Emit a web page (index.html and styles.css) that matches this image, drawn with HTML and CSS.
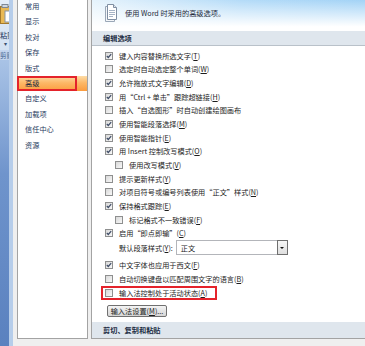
FILE: index.html
```html
<!DOCTYPE html>
<html lang="zh-CN">
  <head>
    <meta charset="UTF-8" />
    <title>Word 选项 - 高级</title>
    <link rel="stylesheet" href="styles.css">
  </head>
  <body>
    <div class="ribbon">
      <div class="ribbon-top">
        <svg class="paste-icon" width="9" height="20" viewBox="0 0 9 20">
          <rect x="0.5" y="2.5" width="9" height="17" fill="#e9b955" stroke="#a57a2c" />
          <rect x="2" y="0.5" width="6" height="3" fill="#cfd6df" stroke="#7d8794" />
          <rect x="5" y="7" width="5" height="11" fill="#ffffff" stroke="#8a96a6" />
        </svg>
        <div class="ribbon-text">粘贴</div>
        <div class="ribbon-arrow">▾</div>
      </div>
      <div class="ribbon-label">剪贴板</div>
      <div class="ribbon-rest"></div>
    </div>
    <div class="stripe"></div>

    <div class="dialog">
      <ul class="nav">
        <li>常用</li>
        <li>显示</li>
        <li>校对</li>
        <li>保存</li>
        <li>版式</li>
        <li class="active">高级<span class="mark"></span></li>
        <li>自定义</li>
        <li>加载项</li>
        <li>信任中心</li>
        <li>资源</li>
      </ul>

      <div class="panel">
        <div class="panel-head">
          <svg class="doc-icon" width="12" height="18" viewBox="0 0 12 18">
            <path d="M0.5 2.5 H6.5 L9.5 5.5 V17.5 H0.5 Z" fill="#f4f6f9" stroke="#9aa7b7" />
            <path d="M2.5 0.5 H8.5 L11.5 3.5 V15.5 H2.5 Z" fill="#ffffff" stroke="#7f8fa3" />
            <path d="M8.5 0.5 V3.5 H11.5" fill="#e3e8ef" stroke="#7f8fa3" />
            <path d="M4 6.5 H10 M4 8.5 H10 M4 10.5 H10 M4 12.5 H8" stroke="#a6b4c6" />
          </svg>
          <span class="head-text">使用 Word 时采用的高级选项。</span>
        </div>

        <div class="section">编辑选项</div>

        <div class="options">
          <div class="opt"><span class="check on"></span><span>键入内容替换所选文字(<u>T</u>)</span></div>
          <div class="opt"><span class="check"></span><span>选定时自动选定整个单词(<u>W</u>)</span></div>
          <div class="opt"><span class="check on"></span><span>允许拖放式文字编辑(<u>D</u>)</span></div>
          <div class="opt"><span class="check on"></span><span>用“Ctrl + 单击”跟踪超链接(<u>H</u>)</span></div>
          <div class="opt"><span class="check"></span><span>插入“自选图形”时自动创建绘图画布</span></div>
          <div class="opt"><span class="check on"></span><span>使用智能段落选择(<u>M</u>)</span></div>
          <div class="opt"><span class="check on"></span><span>使用智能指针(<u>E</u>)</span></div>
          <div class="opt"><span class="check on"></span><span>用 Insert 控制改写模式(<u>O</u>)</span></div>
          <div class="opt sub"><span class="check"></span><span>使用改写模式(<u>V</u>)</span></div>
          <div class="opt"><span class="check"></span><span>提示更新样式(<u>Y</u>)</span></div>
          <div class="opt"><span class="check"></span><span>对项目符号或编号列表使用“正文”样式(<u>N</u>)</span></div>
          <div class="opt"><span class="check on"></span><span>保持格式跟踪(<u>E</u>)</span></div>
          <div class="opt sub"><span class="check"></span><span>标记格式不一致错误(<u>F</u>)</span></div>
          <div class="opt"><span class="check on"></span><span>启用“即点即输”(<u>C</u>)</span></div>

          <div class="select-row">
            <span class="select-label">默认段落样式(<u>Y</u>):</span>
            <div class="select">
              <span class="select-value">正文</span>
              <span class="select-btn"></span>
            </div>
          </div>

          <div class="opt gap"><span class="check on"></span><span>中文字体也应用于西文(<u>F</u>)</span></div>
          <div class="opt"><span class="check"></span><span>自动切换键盘以匹配周围文字的语言(<u>B</u>)</span></div>
          <div class="opt"><span class="check"></span><span>输入法控制处于活动状态(<u>A</u>)</span><span class="mark"></span></div>

          <div class="btn">输入法设置(<u>M</u>)...</div>
        </div>

        <div class="section bottom">剪切、复制和粘贴</div>
      </div>
    </div>
  </body>
</html>
```

FILE: styles.css
```css
* {
  margin: 0;
  padding: 0;
  box-sizing: border-box;
}

body {
  display: flex;
  width: 365px;
  height: 346px;
  overflow: hidden;
  background: #efefef;
  font-family: "Noto Sans CJK SC", "Liberation Sans", sans-serif;
  font-size: 7.2px;
  color: #1c1c1c;
}

u {
  text-decoration: underline;
}

/* Word ribbon edge behind the dialog */
.ribbon {
  width: 9px;
  display: flex;
  flex-direction: column;
  overflow: hidden;
}

.ribbon-top {
  height: 50px;
  background: linear-gradient(#e4edf8, #d3e1f2);
  padding-top: 4px;
}

.paste-icon {
  display: block;
}

.ribbon-text {
  white-space: nowrap;
  margin-top: 6px;
  color: #15315a;
}

.ribbon-arrow {
  font-size: 6px;
  padding-left: 4px;
  color: #3b4f6e;
  line-height: 8px;
}

.ribbon-label {
  height: 10px;
  line-height: 10px;
  white-space: nowrap;
  background: #c3d5ee;
  color: #3e5f8f;
  font-size: 6.5px;
}

.ribbon-rest {
  flex: 1;
  background: linear-gradient(#a9c3e6, #6f94cc 40%, #5a81bf);
}

.stripe {
  width: 4px;
  background: #b6cdea;
}

/* Options dialog */
.dialog {
  flex: 1;
  display: flex;
  gap: 3px;
  padding: 0 0 7px 4px;
  background: #efefef;
}

.nav {
  width: 71px;
  list-style: none;
  background: #ffffff;
  border: 1px solid #a3a3a3;
  border-top: 0;
}

.nav li {
  height: 15.4px;
  line-height: 15.4px;
  padding-left: 7px;
  color: #1f3a60;
  white-space: nowrap;
}

.nav li:first-child {
  margin-top: -1px;
}

.nav li.active {
  position: relative;
  background: linear-gradient(#fddca6, #fdb867 45%, #fb9c3e);
  color: #1c2b40;
}

.nav .mark {
  position: absolute;
  left: -1px;
  top: 0;
  width: 60px;
  height: 15.4px;
  border: 2px solid #e4232b;
}

.panel {
  flex: 1;
  display: flex;
  flex-direction: column;
  background: #ffffff;
  border: 1px solid #a3a3a3;
  border-top: 0;
  border-right: 0;
}

.panel-head {
  height: 28px;
  display: flex;
  align-items: center;
  padding: 0 0 2px 13px;
  background: linear-gradient(rgba(255, 255, 255, 0), #ffffff 95%),
    linear-gradient(to right, #e6f3fc, #b4dbf8 55%, #a3d3f6);
}

.doc-icon {
  display: block;
  margin-right: 8px;
}

.head-text {
  color: #1e2a3a;
}

.section {
  margin-top: 3px;
  height: 15px;
  line-height: 14px;
  padding-left: 11px;
  background: #dfe6ed;
  border-bottom: 1px solid #b9c1c9;
  font-weight: bold;
  color: #1d2d44;
}

.section.bottom {
  margin-top: auto;
  height: 16px;
  line-height: 16px;
  border-bottom: 0;
}

.options {
  display: flex;
  flex-direction: column;
  align-items: flex-start;
  padding: 3px 0 0 13px;
}

.opt {
  position: relative;
  display: flex;
  align-items: center;
  gap: 6px;
  height: 13.65px;
  white-space: nowrap;
}

.opt.sub {
  padding-left: 10px;
}

.opt.gap {
  margin-top: 2.5px;
}

.opt .mark {
  position: absolute;
  left: -4px;
  top: 0;
  width: 116px;
  height: 14px;
  border: 2px solid #e4232b;
}

.check {
  width: 8px;
  height: 8px;
  border: 1px solid #8e8f8f;
  background: linear-gradient(135deg, #d8d8d8, #f8f8f8);
  flex-shrink: 0;
}

.check.on {
  background: linear-gradient(135deg, #d8d8d8, #f8f8f8) center / 6px 6px;
  background-image: url("data:image/svg+xml,%3Csvg xmlns='http://www.w3.org/2000/svg' width='6' height='6' viewBox='0 0 6 6'%3E%3Cpath d='M0.8 3 L2.3 4.5 L5.2 1.2' fill='none' stroke='%23404e68' stroke-width='1.2'/%3E%3C/svg%3E"),
    linear-gradient(135deg, #d8d8d8, #f8f8f8);
  background-repeat: no-repeat;
  background-position: center, 0 0;
  background-size: 6px 6px, 100% 100%;
}

.select-row {
  display: flex;
  align-items: center;
  height: 16px;
  padding-left: 14px;
  white-space: nowrap;
}

.select {
  display: flex;
  align-items: center;
  margin-left: 3px;
  width: 112px;
  height: 15px;
  border: 1px solid #b3b5ba;
}

.select-value {
  flex: 1;
  padding-left: 4px;
}

.select-btn {
  position: relative;
  width: 11px;
  height: 15px;
  margin: -1px -1px -1px 0;
  border: 1px solid #6f6f6f;
  background: linear-gradient(#f7f7f7, #dedede);
}

.select-btn::after {
  content: "";
  position: absolute;
  left: 2.5px;
  top: 5.5px;
  border-left: 2px solid transparent;
  border-right: 2px solid transparent;
  border-top: 2px solid #111111;
}

.btn {
  margin: 5.6px 0 0 2px;
  width: 60px;
  height: 12px;
  line-height: 10px;
  text-align: center;
  border: 1px solid #707070;
  border-radius: 2px;
  background: linear-gradient(#f4f4f4, #e4e4e4 50%, #d6d6d6);
  white-space: nowrap;
}
```
